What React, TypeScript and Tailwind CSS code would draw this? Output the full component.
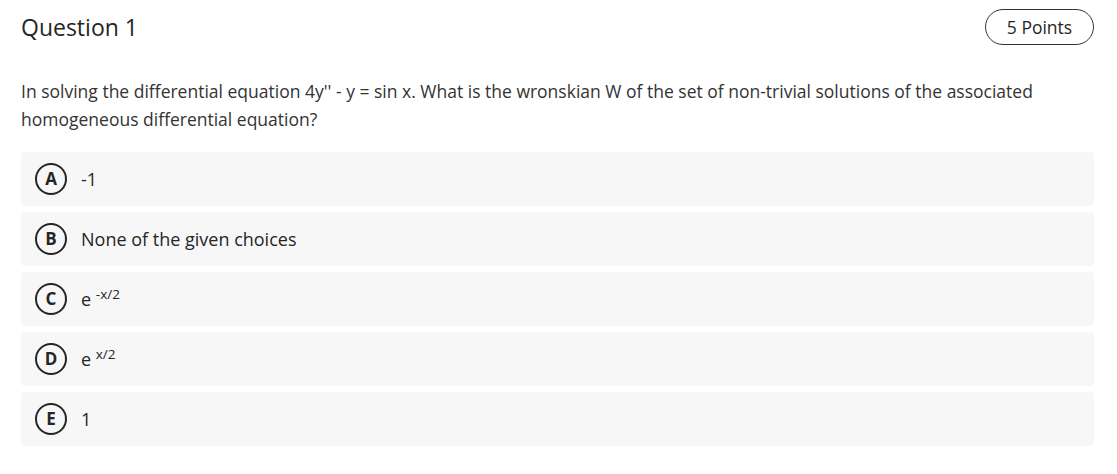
import React from "react";

interface Choice {
  letter: string;
  text: React.ReactNode;
}

const choices: Choice[] = [
  { letter: "A", text: "-1" },
  { letter: "B", text: "None of the given choices" },
  {
    letter: "C",
    text: (
      <>
        e <sup className="text-[13.5px]">-x/2</sup>
      </>
    ),
  },
  {
    letter: "D",
    text: (
      <>
        e <sup className="text-[13.5px]">x/2</sup>
      </>
    ),
  },
  { letter: "E", text: "1" },
];

export default function App() {
  return (
    <div
      className="min-h-screen bg-white pl-[21px] pr-[23px] pt-[9px] text-[#333333]"
      style={{ fontFamily: '"Open Sans", "Liberation Sans", sans-serif' }}
    >
      {/* Header */}
      <div className="flex items-center justify-between h-[36px]">
        <h1 className="text-[23px] text-[#252525]">Question 1</h1>
        <span className="h-[36px] w-[109px] shrink-0 flex items-center justify-center rounded-full border border-[#333] text-[17.5px] text-[#252525]">
          5 Points
        </span>
      </div>

      {/* Question text */}
      <p className="mt-[32px] text-[17.5px] leading-[28px]">
        In solving the differential equation 4y'' - y = sin x. What is the
        wronskian W of the set of non-trivial solutions of the associated
        homogeneous differential equation?
      </p>

      {/* Choices */}
      <div className="mt-[19px] flex flex-col gap-[6px]">
        {choices.map((c) => (
          <div
            key={c.letter}
            className="h-[54px] flex items-center bg-[#f7f7f7] rounded-[4px] pl-[14px]"
          >
            <span className="w-[32px] h-[32px] shrink-0 rounded-full border-2 border-[#252525] flex items-center justify-center text-[17px] font-bold text-[#252525]">
              {c.letter}
            </span>
            <span className="ml-[14px] text-[18px] text-[#252525]">{c.text}</span>
          </div>
        ))}
      </div>
    </div>
  );
}
